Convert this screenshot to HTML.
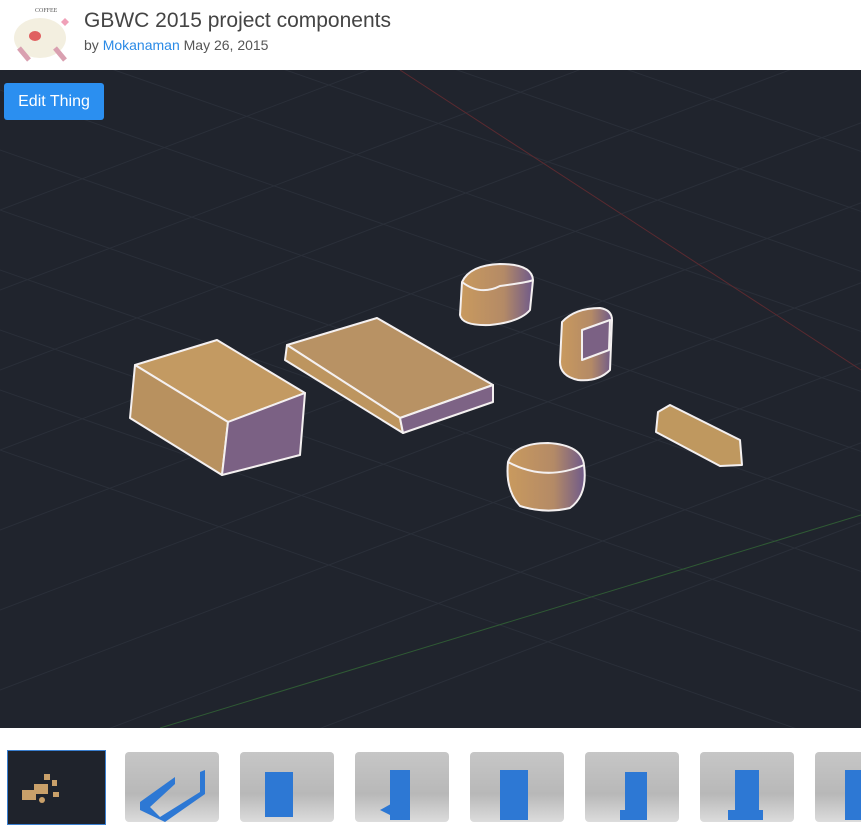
<!DOCTYPE html>
<html style="overflow:hidden;height:827px"><head><meta charset="utf-8"><style>
body{margin:0;width:861px;height:827px;background:#fff;font-family:"Liberation Sans",sans-serif;overflow:hidden;position:relative}
.hdr{position:absolute;left:0;top:0;width:861px;height:70px}
h1{position:absolute;left:84px;top:9px;margin:0;font-size:21px;font-weight:normal;color:#444}
.by{position:absolute;left:84px;top:37px;font-size:14px;color:#555}
.by a{color:#2a8ae6;text-decoration:none}
.main{position:absolute;left:0;top:70px;width:861px;height:658px;background:#20242d;overflow:hidden}
.btn{position:absolute;left:4px;top:83px;width:100px;height:37px;background:#2b8ff0;border-radius:3px;color:#fff;font-size:16px;line-height:37px;text-align:center}
.th{position:absolute;top:752px;width:94px;height:70px;border-radius:4px;background:linear-gradient(#c6c6c6,#b8b8b8 60%,#dcdcdc);overflow:hidden}
svg{display:block}
</style></head><body>
<div class="hdr">
<svg width="70" height="62" style="position:absolute;left:5px;top:4px">
<ellipse cx="35" cy="34" rx="26" ry="20" fill="#f3efe0"/>
<ellipse cx="30" cy="32" rx="6" ry="5" fill="#e06060"/>
<path d="M14 44 L24 56 M50 44 L60 56" stroke="#d9a0b0" stroke-width="5"/>
<path d="M56 18 l4 -4 4 4 -4 4z" fill="#f0a0b8"/>
<text x="30" y="8" font-size="6" fill="#555" font-family="Liberation Serif">COFFEE</text>
</svg>
<h1>GBWC 2015 project components</h1>
<div class="by">by <a>Mokanaman</a> May 26, 2015</div>
</div>
<div class="main">
<svg width="861" height="658" style="position:absolute;left:0;top:0">
<g stroke="#2a2f39" stroke-width="1">
<path d="M-400 0 L1200 560 M-400 60 L1200 620 M-400 120 L1200 680 M-400 180 L1200 740 M-400 240 L1200 800 M-400 -60 L1200 500 M-400 -120 L1200 440 M-400 -180 L1200 380 M-400 -240 L1200 320 M-400 -300 L1200 260 M-400 -360 L1200 200"/>
<path d="M0 300 L1000 -80 M0 380 L1000 0 M0 460 L1000 80 M0 540 L1000 160 M0 620 L1000 240 M0 700 L1000 320 M0 780 L1000 400 M0 220 L1000 -160 M0 140 L1000 -240"/>
</g>
<line x1="400" y1="0" x2="861" y2="300" stroke="#5a2a30" stroke-width="1"/>
<line x1="160" y1="658" x2="861" y2="445" stroke="#2f5a34" stroke-width="1"/>
<defs><linearGradient id="cy" x1="0" x2="1"><stop offset="0" stop-color="#c99a5e"/><stop offset=".6" stop-color="#b48a66"/><stop offset="1" stop-color="#6f5a8a"/></linearGradient></defs>
<g stroke="#f4f0f0" stroke-width="2" stroke-linejoin="round">
<g transform="translate(0,-70)">
<polygon points="135,365 217,340 305,393 228,422" fill="#c39a62"/>
<polygon points="135,365 228,422 222,475 130,418" fill="#b8915f"/>
<polygon points="228,422 305,393 300,455 222,475" fill="#7b6184"/>
<polygon points="287,345 377,318 493,385 400,418" fill="#b89264"/>
<polygon points="287,345 400,418 403,433 285,360" fill="#bd955f"/>
<polygon points="400,418 493,385 493,402 403,433" fill="#7d6385"/>
<path d="M462 282 Q470 265 500 264 Q532 264 533 280 L530 310 Q520 322 490 325 Q462 326 460 315Z" fill="url(#cy)"/>
<path d="M462 282 Q480 296 500 286 Q530 282 533 280" fill="none"/>
<path d="M562 322 Q575 308 600 308 Q612 310 612 320 L610 370 Q598 382 578 380 Q560 376 560 362Z" fill="url(#cy)"/>
<polygon points="582,330 610,320 609,350 582,360" fill="#7b6184"/>
<path d="M508 462 Q515 443 548 443 Q582 445 584 465 Q588 495 570 508 Q545 514 520 506 Q505 490 508 462Z" fill="url(#cy)"/>
<path d="M508 462 Q545 482 584 465" fill="none"/>
<polygon points="658,412 670,405 740,440 742,465 720,466 656,432" fill="#bf985f"/>
</g></g>
</svg>
</div>
<div class="btn">Edit Thing</div>
<div style="position:absolute;left:7px;top:750px;width:99px;height:75px;background:#1f232c;border:1px solid #3a7fd0;box-sizing:border-box"></div>
<div class="th" style="left:125px"></div>
<div class="th" style="left:240px"></div>
<div class="th" style="left:355px"></div>
<div class="th" style="left:470px"></div>
<div class="th" style="left:585px"></div>
<div class="th" style="left:700px"></div>
<div class="th" style="left:815px;width:46px;border-radius:4px 0 0 4px"></div>
<svg width="861" height="70" style="position:absolute;left:0;top:752px">
<g fill="#2d78d4">
<polygon points="140,50 175,25 175,32 150,55 160,65 200,40 200,20 205,18 205,42 165,70 140,58"/>
<rect x="265" y="20" width="28" height="45"/><rect x="390" y="18" width="20" height="50"/><polygon points="380,58 398,48 410,55 400,68"/>
<rect x="500" y="18" width="28" height="50"/><rect x="625" y="20" width="22" height="48"/><rect x="620" y="58" width="10" height="10"/>
<rect x="735" y="18" width="24" height="45"/><rect x="728" y="58" width="35" height="10"/><rect x="845" y="18" width="16" height="50"/>
</g>
<g fill="#c9a06a"><rect x="22" y="38" width="14" height="10"/><rect x="34" y="32" width="14" height="10"/><rect x="44" y="22" width="6" height="6"/><rect x="52" y="28" width="5" height="6"/><circle cx="42" cy="48" r="3"/><rect x="53" y="40" width="6" height="5"/></g>
</svg>
</body></html>
